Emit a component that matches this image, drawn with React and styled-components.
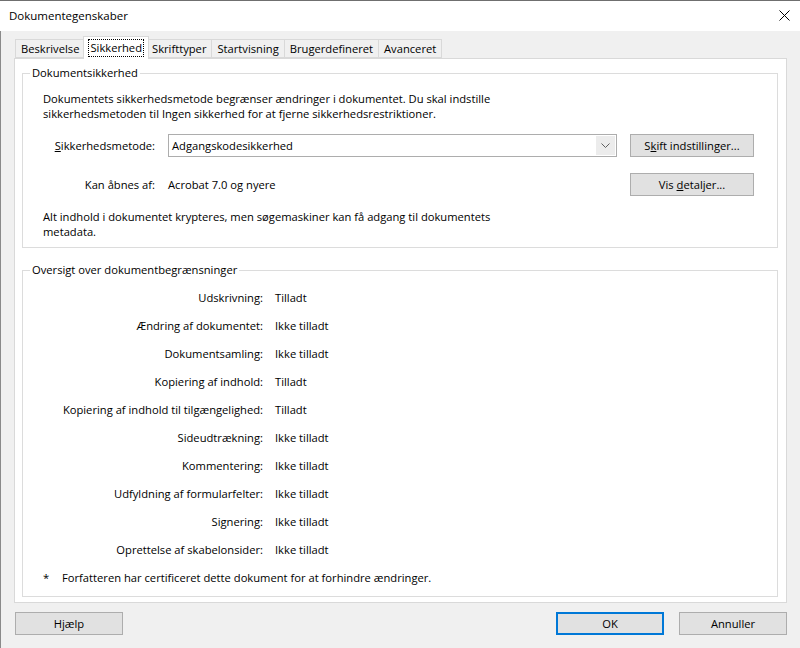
import React from "react";
import styled, { createGlobalStyle } from "styled-components";

const GlobalStyle = createGlobalStyle`
  html, body {
    margin: 0;
    padding: 0;
    background: #f0f0f0;
  }
  body {
    font-family: "Open Sans", "Noto Sans", sans-serif;
    font-size: 11.2px;
    color: #000;
  }
`;

const Window = styled.div`
  width: 800px;
  height: 648px;
  box-sizing: border-box;
  border-top: 1px solid #6f6f6f;
  display: flex;
  flex-direction: column;
  background: #f0f0f0;
  overflow: hidden;
`;

const TitleBar = styled.div`
  height: 30px;
  flex: none;
  background: #fff;
  display: flex;
  align-items: center;
  justify-content: space-between;
  padding: 0 10px 1px 9px;
  box-sizing: border-box;
  font-size: 11.5px;
`;

const CloseButton = styled.div`
  width: 12px;
  height: 12px;
  display: flex;
  align-items: center;
  justify-content: center;
`;

const Body = styled.div`
  flex: 1;
  display: flex;
  flex-direction: column;
  border-left: 1px solid #8a8a8a;
  padding: 4px 13px 0 13px;
`;

const TabStrip = styled.div`
  display: flex;
  align-items: flex-end;
  height: 23px;
  padding-left: 1px;
  position: relative;
  z-index: 1;
`;

const Tab = styled.div`
  box-sizing: border-box;
  height: ${(p) => (p.$active ? "23px" : "19px")};
  margin: ${(p) => (p.$active ? "0 -2px -1px -2px" : "0")};
  padding: 0 ${(p) => (p.$active ? "4px" : "5px")};
  border: 1px solid #d9d9d9;
  border-bottom: ${(p) => (p.$active ? "none" : "1px solid #d9d9d9")};
  border-left: ${(p) => (p.$first || p.$active ? "1px solid #d9d9d9" : "none")};
  background: ${(p) => (p.$active ? "#fff" : "#f0f0f0")};
  display: flex;
  align-items: center;
  white-space: nowrap;
  position: relative;
  z-index: ${(p) => (p.$active ? 2 : 1)};
`;

const FocusRing = styled.span`
  border: 1px dotted #000;
  padding: 0 1px;
  line-height: 16px;
`;

const Panel = styled.div`
  height: 545px;
  box-sizing: border-box;
  background: #fff;
  border: 1px solid #d9d9d9;
  padding: 6px 8px 0 7px;
  display: flex;
  flex-direction: column;
  gap: 14px;
`;

const Group = styled.fieldset`
  margin: 0;
  padding: 0 0 0 7px;
  border: 1px solid #dcdcdc;
  min-width: 0;
`;

const Legend = styled.legend`
  padding: 0 2px;
  line-height: 16px;
`;

const GroupInner = styled.div`
  padding: ${(p) => p.$pad};
`;

const Para = styled.p`
  margin: 0;
  line-height: 15px;
  margin-top: ${(p) => p.$top || "0"};
`;

const FormGrid = styled.div`
  display: grid;
  grid-template-columns: 112px 449px 124px;
  column-gap: 13px;
  row-gap: 16px;
  margin-top: 13px;
  margin-bottom: 13px;
  align-items: center;
`;

const FieldLabel = styled.div`
  text-align: right;
  white-space: nowrap;
`;

const FieldValue = styled.div`
  white-space: nowrap;
`;

const Select = styled.div`
  height: 23px;
  box-sizing: border-box;
  border: 1px solid #adadad;
  display: flex;
  align-items: stretch;
  background: #fff;
`;

const SelectText = styled.div`
  flex: 1;
  display: flex;
  align-items: center;
  padding-left: 3px;
`;

const SelectArrow = styled.div`
  width: 19px;
  background: #ececec;
  display: flex;
  align-items: center;
  justify-content: center;
  margin: 1px;
`;

const Button = styled.div`
  box-sizing: border-box;
  width: ${(p) => p.$w || "124px"};
  height: 23px;
  background: #e1e1e1;
  border: ${(p) => (p.$default ? "2px solid #0078d7" : "1px solid #adadad")};
  display: flex;
  align-items: center;
  justify-content: center;
  white-space: nowrap;
`;

const RestrictGrid = styled.div`
  display: grid;
  grid-template-columns: 220px 1fr;
  grid-auto-rows: 28px;
  align-items: center;
  margin-top: 5px;
`;

const RestrictLabel = styled.div`
  text-align: right;
  white-space: nowrap;
`;

const RestrictValue = styled.div`
  padding-left: 12px;
  white-space: nowrap;
`;

const Footnote = styled.div`
  height: 28px;
  display: flex;
  align-items: center;
  margin-bottom: 5px;
`;

const Star = styled.span`
  width: 19px;
  flex: none;
`;

const ButtonBar = styled.div`
  display: flex;
  align-items: center;
  margin-top: 9px;
  gap: 15px;
  padding-left: 1px;
  & > :first-child {
    margin-right: auto;
  }
`;

const restrictions = [
  ["Udskrivning:", "Tilladt"],
  ["Ændring af dokumentet:", "Ikke tilladt"],
  ["Dokumentsamling:", "Ikke tilladt"],
  ["Kopiering af indhold:", "Tilladt"],
  ["Kopiering af indhold til tilgængelighed:", "Tilladt"],
  ["Sideudtrækning:", "Ikke tilladt"],
  ["Kommentering:", "Ikke tilladt"],
  ["Udfyldning af formularfelter:", "Ikke tilladt"],
  ["Signering:", "Ikke tilladt"],
  ["Oprettelse af skabelonsider:", "Ikke tilladt"],
];

const tabs = [
  "Beskrivelse",
  "Sikkerhed",
  "Skrifttyper",
  "Startvisning",
  "Brugerdefineret",
  "Avanceret",
];

export default function App() {
  return (
    <>
      <GlobalStyle />
      <Window>
        <TitleBar>
          <span>Dokumentegenskaber</span>
          <CloseButton>
            <svg width="11" height="11" viewBox="0 0 11 11">
              <path d="M0.5 0.5 L10.5 10.5 M10.5 0.5 L0.5 10.5" stroke="#000" strokeWidth="1" />
            </svg>
          </CloseButton>
        </TitleBar>
        <Body>
          <TabStrip>
            {tabs.map((t, i) =>
              t === "Sikkerhed" ? (
                <Tab key={t} $active>
                  <FocusRing>{t}</FocusRing>
                </Tab>
              ) : (
                <Tab key={t} $first={i === 0}>
                  {t}
                </Tab>
              )
            )}
          </TabStrip>
          <Panel>
            <Group>
              <Legend>Dokumentsikkerhed</Legend>
              <GroupInner $pad="0 0 8px 13px">
                <Para $top="10px">
                  Dokumentets sikkerhedsmetode begrænser ændringer i dokumentet. Du skal indstille
                  <br />
                  sikkerhedsmetoden til Ingen sikkerhed for at fjerne sikkerhedsrestriktioner.
                </Para>
                <FormGrid>
                  <FieldLabel>
                    <u>S</u>ikkerhedsmetode:
                  </FieldLabel>
                  <Select>
                    <SelectText>Adgangskodesikkerhed</SelectText>
                    <SelectArrow>
                      <svg width="9" height="5" viewBox="0 0 9 5">
                        <path d="M0.5 0.5 L4.5 4.5 L8.5 0.5" fill="none" stroke="#606060" strokeWidth="1" />
                      </svg>
                    </SelectArrow>
                  </Select>
                  <Button>
                    <span>
                      S<u>k</u>ift indstillinger...
                    </span>
                  </Button>
                  <FieldLabel>Kan åbnes af:</FieldLabel>
                  <FieldValue>Acrobat 7.0 og nyere</FieldValue>
                  <Button>
                    <span>
                      Vis <u>d</u>etaljer...
                    </span>
                  </Button>
                </FormGrid>
                <Para>
                  Alt indhold i dokumentet krypteres, men søgemaskiner kan få adgang til dokumentets
                  <br />
                  metadata.
                </Para>
              </GroupInner>
            </Group>
            <Group>
              <Legend>Oversigt over dokumentbegrænsninger</Legend>
              <GroupInner $pad="0 0 0 13px">
                <RestrictGrid>
                  {restrictions.map(([label, value]) => (
                    <React.Fragment key={label}>
                      <RestrictLabel>{label}</RestrictLabel>
                      <RestrictValue>{value}</RestrictValue>
                    </React.Fragment>
                  ))}
                </RestrictGrid>
                <Footnote>
                  <Star>*</Star>
                  Forfatteren har certificeret dette dokument for at forhindre ændringer.
                </Footnote>
              </GroupInner>
            </Group>
          </Panel>
          <ButtonBar>
            <Button $w="108px">Hjælp</Button>
            <Button $w="108px" $default>
              OK
            </Button>
            <Button $w="108px">Annuller</Button>
          </ButtonBar>
        </Body>
      </Window>
    </>
  );
}
